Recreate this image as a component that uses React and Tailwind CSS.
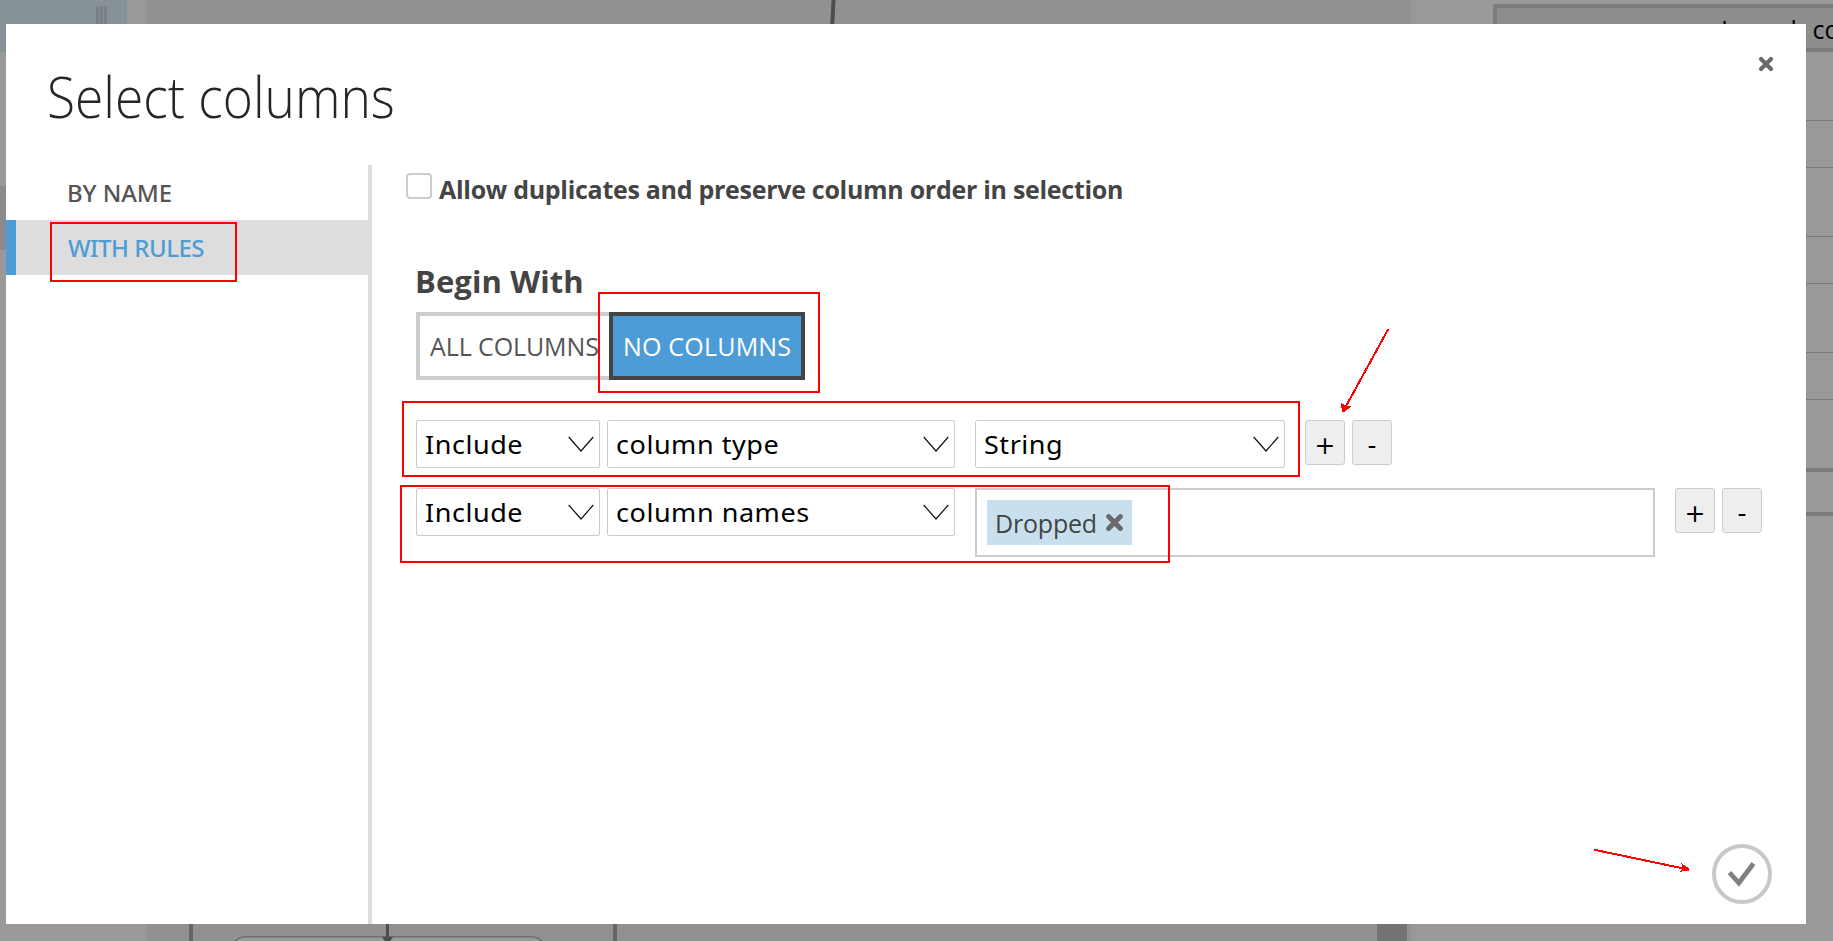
function Chevron() {
  return (
    <svg className="h-4 w-[26px] shrink-0" viewBox="0 0 26 16" fill="none" stroke="#111" strokeWidth="1.2">
      <path d="M0.7 1 L13 15 L25.3 1" />
    </svg>
  );
}

function Cross({ className }) {
  return (
    <svg className={className} viewBox="0 0 16 16" fill="none" stroke="#6a6a6a" strokeWidth="4.2" strokeLinecap="round">
      <path d="M3 3 L13 13 M13 3 L3 13" />
    </svg>
  );
}

function Select({ label, className }) {
  return (
    <div className={`flex h-12 items-center justify-between rounded-[2px] border border-[#ccc] bg-white pr-[5px] pl-[8px] ${className}`}>
      <span className="origin-left scale-x-[1.08] pt-px font-['Noto_Sans',sans-serif] text-[25px] leading-none tracking-[0.5px] whitespace-nowrap text-black">{label}</span>
      <Chevron />
    </div>
  );
}

function SmallButton({ children }) {
  return (
    <button className="flex h-[45px] w-10 items-center justify-center rounded-[3px] border border-[#ccc] bg-[#eee] pt-[5px] font-['DejaVu_Sans',sans-serif] text-[25px] leading-none text-black">
      {children}
    </button>
  );
}

function RowButtons({ className }) {
  return (
    <div className={`flex gap-[7px] ${className}`}>
      <SmallButton>+</SmallButton>
      <SmallButton>-</SmallButton>
    </div>
  );
}

function Workspace() {
  return (
    <div className="flex h-full w-full bg-[#999]">
      <div className="flex w-[147px] flex-col">
        <div className="flex h-[52px] w-[127px] justify-end gap-px bg-[#869297] pt-[6px] pr-[20px]">
          <div className="w-[3px] bg-[#7b8082]" />
          <div className="w-[3px] bg-[#7b8082]" />
          <div className="w-[3px] bg-[#7b8082]" />
        </div>
        <div className="mt-[134px] h-16 bg-[#8b8b8b]" />
      </div>
      <div className="w-[1264px] bg-[#919191]">
        <svg className="h-[941px] w-[1264px]" viewBox="147 0 1264 941">
          <path d="M833.5 0 L832 30" stroke="#4d4d4d" strokeWidth="4" />
          <path d="M191 900 V941 M615 900 V941" stroke="#666" strokeWidth="4" />
          <rect x="230" y="936.7" width="317" height="60" rx="16" fill="#999" stroke="#6e6e6e" strokeWidth="1.5" />
          <path d="M387.5 920 V938" stroke="#4d4d4d" strokeWidth="3" />
          <path d="M382 937 H393 L389 943 H386 Z" fill="#4d4d4d" />
          <rect x="1377" y="900" width="30" height="41" fill="#747474" />
        </svg>
      </div>
      <div className="w-[422px] overflow-hidden pt-1">
        <div className="ml-[82px] flex h-12 w-[580px] items-center rounded-[3px] border-4 border-[#7c7c7c] bg-[#8d8d8d] pl-[224px]">
          <span className="pt-[2px] text-[25px] leading-none whitespace-nowrap text-black">Launch column selector</span>
        </div>
        <div className="ml-[82px] h-[69px] border-b border-[#7c7c7c]" />
        <div className="ml-[82px] h-[47px] border-b border-[#7c7c7c]" />
        <div className="ml-[82px] h-[69px] border-b border-[#7c7c7c]" />
        <div className="ml-[82px] h-[47px] border-b border-[#7c7c7c]" />
        <div className="ml-[82px] h-[69px] border-b border-[#7c7c7c]" />
        <div className="ml-[82px] h-[47px] border-b border-[#7c7c7c]" />
        <div className="mt-[68px] ml-[82px] h-12 border-y-4 border-[#7c7c7c]" />
      </div>
    </div>
  );
}

function Dialog() {
  return (
    <div className="absolute top-6 left-[6px] flex h-[900px] w-[1800px] flex-col bg-white">
      <header className="flex h-[141px] shrink-0 items-start justify-between">
        <h1 className="mt-[42px] ml-[41px] origin-left scale-x-[0.903] text-[57px] leading-[60px] font-light whitespace-nowrap text-[#262626]">
          Select columns
        </h1>
        <button className="mt-8 mr-8">
          <Cross className="h-4 w-4" />
        </button>
      </header>
      <div className="flex flex-1">
        <nav className="flex w-[366px] flex-col border-r-4 border-[#ddd] font-['Noto_Sans',sans-serif] text-[24px] font-medium">
          <div className="flex h-[55px] items-center pl-[61px] text-[#555]">
            <span className="tracking-[-0.1px]">BY NAME</span>
          </div>
          <div className="flex h-[55px] items-center border-l-10 border-[#4e9cd6] bg-[#ddd] pl-[52px] text-[#4e9cd6]">
            <span className="tracking-[-0.5px]">WITH RULES</span>
          </div>
        </nav>
        <main className="flex flex-1 flex-col pl-[34px]">
          <div className="flex h-[48px] items-start pt-2">
            <div className="h-[26px] w-[26px] rounded-[4px] border-2 border-[#ccc] bg-white" />
            <span className="mt-[3px] ml-[7px] text-[25px] leading-[26px] font-bold tracking-[-0.29px] whitespace-nowrap text-[#444]">
              Allow duplicates and preserve column order in selection
            </span>
          </div>
          <div className="pl-[10px]">
            <h2 className="mt-[48px] h-[51px] -ml-px text-[31px] leading-[40px] font-bold tracking-[0.1px] text-[#444]">Begin With</h2>
            <div className="flex h-[68px]">
              <div className="flex w-[193px] items-center border-4 border-r-0 border-[#ccc] pt-[2px] pl-[10px] text-[25px] tracking-[-0.1px] whitespace-nowrap text-[#555]">
                ALL COLUMNS
              </div>
              <div className="flex w-[196px] items-center border-4 border-[#444] bg-[#4e9cd6] pt-[2px] pl-[10px] text-[25px] tracking-[0.2px] whitespace-nowrap text-white">
                NO COLUMNS
              </div>
            </div>
            <div className="mt-10 flex h-12 items-start">
              <Select label="Include" className="w-[184px]" />
              <Select label="column type" className="ml-[7px] w-[348px]" />
              <Select label="String" className="ml-5 w-[310px]" />
              <RowButtons className="ml-5" />
            </div>
            <div className="mt-5 flex items-start">
              <Select label="Include" className="w-[184px]" />
              <Select label="column names" className="ml-[7px] w-[348px]" />
              <div className="ml-5 flex h-[69px] w-[680px] items-center border-2 border-[#ccc] pl-[10px]">
                <div className="flex h-[45px] w-[145px] items-center bg-[#c8e0ed] pl-[8px] text-[25px] text-[#444]">
                  <span className="pt-[2px] tracking-[-0.2px]">Dropped</span>
                  <Cross className="ml-[8px] h-[19px] w-[19px]" />
                </div>
              </div>
              <RowButtons className="ml-5" />
            </div>
          </div>
          <footer className="mt-auto flex justify-end pr-[34px] pb-5">
            <button className="flex h-[60px] w-[60px] items-center justify-center rounded-full border-4 border-[#c8c8c8]">
              <svg className="h-[30px] w-[30px]" viewBox="0 0 30 30" fill="none" stroke="#808080" strokeWidth="4.8">
                <path d="M2.5 13.5 L11.8 24 L26.5 4.5" />
              </svg>
            </button>
          </footer>
        </main>
      </div>
    </div>
  );
}

function Annotations() {
  return (
    <div>
      <div className="absolute top-[222px] left-[50px] h-[60px] w-[187px] border-2 border-[#f00]" />
      <div className="absolute top-[292px] left-[598px] h-[101px] w-[222px] border-2 border-[#f00]" />
      <div className="absolute top-[401px] left-[402px] h-[76px] w-[898px] border-2 border-[#f00]" />
      <div className="absolute top-[485px] left-[400px] h-[78px] w-[770px] border-2 border-[#f00]" />
      <svg className="absolute top-[325px] left-[1335px] h-[90px] w-[60px]" viewBox="1335 325 60 90" shapeRendering="crispEdges">
        <path d="M1388.3 329 L1345 408" stroke="#f00" strokeWidth="2" />
        <path d="M1341 403 L1345.5 405.5 L1351 405.5 L1350.5 407 L1344 412 H1342 Z" fill="#f00" />
      </svg>
      <svg className="absolute top-[845px] left-[1590px] h-[30px] w-[105px]" viewBox="1590 845 105 30" shapeRendering="crispEdges">
        <path d="M1594 849.7 L1686 869" stroke="#f00" strokeWidth="2" />
        <path d="M1681 863 L1689 868.5 V870.5 L1679 872 L1683 868 Z" fill="#f00" />
      </svg>
    </div>
  );
}

export default function App() {
  return (
    <div className="relative h-[941px] w-[1833px] overflow-hidden font-['Open_Sans','Noto_Sans',sans-serif]">
      <Workspace />
      <Dialog />
      <Annotations />
    </div>
  );
}
